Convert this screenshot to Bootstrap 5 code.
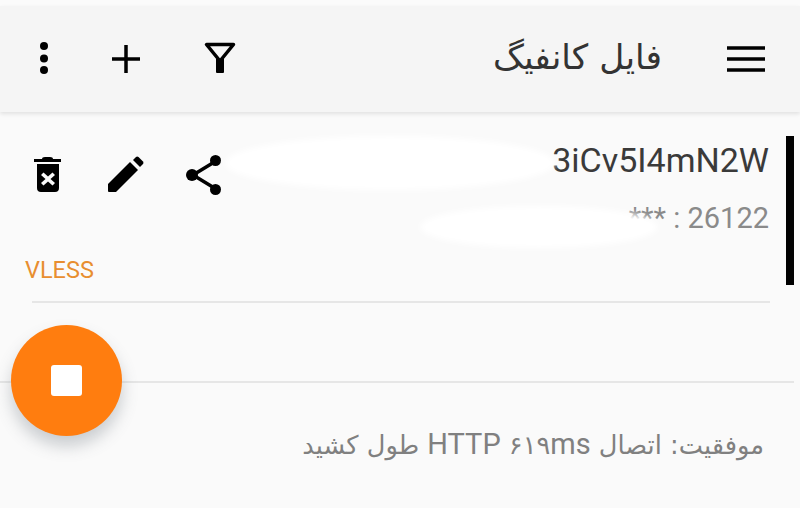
<!DOCTYPE html>
<html lang="fa">
<head>
<meta charset="utf-8">
<title>فایل کانفیگ</title>
<link href="https://cdn.jsdelivr.net/npm/bootstrap@5.3.0/dist/css/bootstrap.min.css" rel="stylesheet">
<style>
html,body{height:100%;overflow:hidden}
body{background:#fafafa;font-family:"Roboto","DejaVu Sans",sans-serif;width:800px;height:508px;position:relative}
.top-strip{height:6px;background:#fbfbfb}
.tool-bar{height:106px;background:#f5f5f5;box-shadow:0 2px 4px rgba(0,0,0,.1);padding:0 35px 0 33px}
.tb-slot{display:flex;justify-content:center;align-items:center}
.tb-title{font-family:"DejaVu Sans",sans-serif;font-size:34.5px;color:#333;line-height:1;margin:-4px 65px 0 0;font-weight:400}
.cfg{height:189px;padding-top:24px;position:relative}
.cfg-icons{padding-left:32px;padding-top:19px}
.cfg-main{margin-right:31px;text-align:right}
.cfg-name{font-size:34px;line-height:36px;color:#3a3a3a;margin-top:6px}
.cfg-addr{font-size:29px;line-height:32px;color:#8a8a8a;margin-top:24px}
.cfg-type{font-size:23.500px;line-height:26px;color:#e88e30;position:absolute;left:25px;top:145px}
.cfg-bar{width:8px;height:149px;background:#000;position:absolute;left:786px;top:24px}
.rule-a{height:2px;background:#e6e6e6;margin:0 30px 0 32px}
.rule-b{height:2px;background:#e6e6e6;margin:78px 6px 0 0}
.status{font-family:"DejaVu Sans",sans-serif;font-size:25.700px;line-height:32px;color:#808080;margin:45px 36px 0 0;text-align:right;white-space:nowrap}
.status .lat{font-family:"Roboto",sans-serif;font-size:29px}
.fab{width:111px;height:111px;border-radius:50%;background:#ff7d0f;position:absolute;left:11px;top:325px;box-shadow:0 10px 16px rgba(90,100,110,.3);display:flex;align-items:center;justify-content:center}
.fab-stop{width:31px;height:31px;background:#fff;border-radius:3px}
.blot{position:absolute;background:#fff;filter:blur(3px)}
.blot-a{left:225px;top:136px;width:330px;height:54px;border-radius:50%}
.blot-b{left:420px;top:206px;width:238px;height:42px;border-radius:50%}
</style>
</head>
<body>
<div class="top-strip"></div>
<header class="tool-bar d-flex align-items-center justify-content-between">
  <div class="d-flex align-items-center">
    <div class="tb-slot" style="width:22px"><svg width="14" height="34" viewBox="0 0 14 34"><circle cx="7" cy="4" r="4" fill="#000"/><circle cx="7" cy="16.500" r="4" fill="#000"/><circle cx="7" cy="28" r="4" fill="#000"/></svg></div>
    <div class="tb-slot" style="width:30px;margin-left:56px"><svg width="30" height="30" viewBox="0 0 30 30"><path d="M15 1V29M1 15H29" stroke="#000" stroke-width="3.500" fill="none"/></svg></div>
    <div class="tb-slot" style="width:32px;margin-left:63px;margin-top:-3px"><svg width="32" height="32" viewBox="0 0 32 32"><path d="M2.500 2.500H29.500L16 19Z" fill="none" stroke="#000" stroke-width="3.500" stroke-linejoin="round"/><path d="M12 17H20V30Q20 31 19 31H13Q12 31 12 30Z" fill="#000"/></svg></div>
  </div>
  <div class="d-flex align-items-center">
    <h1 class="tb-title" dir="rtl">فایل کانفیگ</h1>
    <svg width="38" height="26" viewBox="0 0 38 26"><path d="M0 2H38M0 13H38M0 24H38" stroke="#000" stroke-width="3.500"/></svg>
  </div>
</header>
<section class="cfg">
  <div class="d-flex justify-content-between">
    <div class="cfg-icons d-flex align-items-start">
      <div style="width:33px;margin-top:1px"><svg width="30" height="37" viewBox="0 0 30 37"><path d="M2 3H29V6H2Z" fill="#000"/><path d="M10 3Q10 1 13 1H18Q21 1 21 3Z" fill="#000"/><path fill-rule="evenodd" fill="#000" d="M5 8H27V32Q27 36 23 36H9Q5 36 5 32ZM11.500 16.500L9 19 13.500 23 9 27 11.500 29.500 16 25.500 20.500 29.500 23 27 18.500 23 23 19 20.500 16.500 16 20.500Z"/></svg></div>
      <div style="width:38px;margin-left:42px;margin-top:1px"><svg width="38" height="37" viewBox="0 0 38 37"><path d="M1 28L23 6 31 14 9 36H2Q1 36 1 35Z" fill="#000"/><path d="M26 4 29 1Q30 0 31.500 1L36 5.500Q37 7 36 8L33 11Z" fill="#000"/></svg></div>
      <div style="width:38px;margin-left:41px;margin-top:-1px"><svg width="38" height="42" viewBox="0 0 38 42"><path d="M30 7 7 21 30 35" stroke="#000" stroke-width="3.500" fill="none"/><circle cx="29.500" cy="6.500" r="5.500" fill="#000"/><circle cx="6" cy="21" r="6" fill="#000"/><circle cx="29.500" cy="35.500" r="5.500" fill="#000"/></svg></div>
    </div>
    <div class="cfg-main">
      <div class="cfg-name">3iCv5I4mN2W</div>
      <div class="cfg-addr">*** : 26122</div>
    </div>
  </div>
  <div class="cfg-type">VLESS</div>
  <div class="cfg-bar"></div>
</section>
<div class="rule-a"></div>
<div class="rule-b"></div>
<div class="status" dir="rtl">موفقیت: اتصال <span dir="ltr">۶۱۹<span class="lat">ms</span></span> <span class="lat">HTTP</span> طول کشید</div>
<div class="blot blot-a"></div>
<div class="blot blot-b"></div>
<div class="fab"><div class="fab-stop"></div></div>
<script src="https://cdn.jsdelivr.net/npm/bootstrap@5.3.0/dist/js/bootstrap.bundle.min.js"></script>
</body>
</html>
